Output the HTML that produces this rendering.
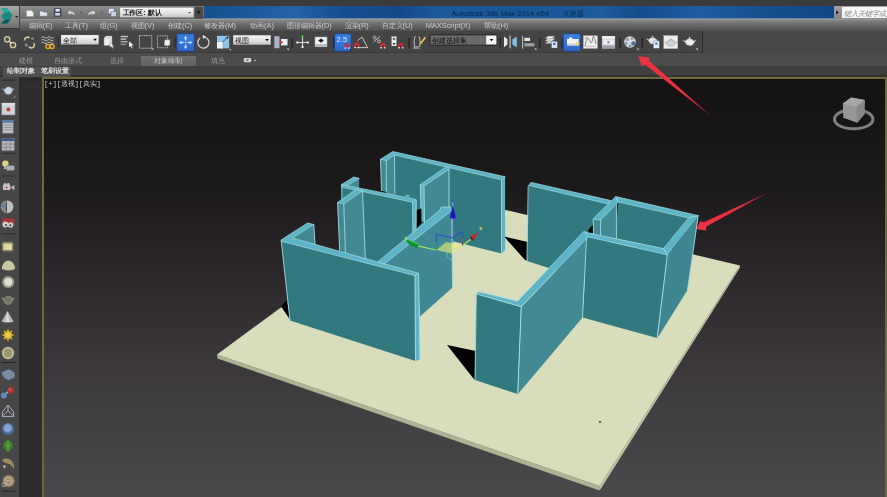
<!DOCTYPE html>
<html><head><meta charset="utf-8">
<style>
html,body{margin:0;padding:0;background:#454545;}
body{width:887px;height:497px;overflow:hidden;position:relative;font-family:"Liberation Sans",sans-serif;}
.abs{position:absolute;}
#topstrip{left:0;top:0;width:887px;height:6px;background:#3b3b3b;}
#qat{left:20px;top:6px;width:184px;height:13px;background:linear-gradient(#8e8e8e,#6a6a6a);}
#title{left:204px;top:6px;width:629.8px;height:13px;background:linear-gradient(90deg,#15508e 0%,#1b5899 6%,#2263a8 14%,#184f90 22%,#15498a 31%,#1d5a9c 37%,#1b5696 50%,#1e5c9e 63%,#164c8c 69%,#1f5ea2 79%,#17508f 88%,#124786 100%);border-bottom:1px solid #5c86b4;box-sizing:border-box;}
#titleR{left:833.8px;top:6px;width:53.2px;height:13px;background:linear-gradient(#a2a2a2,#858585);}
#search{left:841.8px;top:7px;width:45.2px;height:11px;background:#f6f6f6;}
#appbtn{left:0;top:6px;width:20px;height:23px;background:linear-gradient(#a9a9a9,#8a8a8a 55%,#6e6e6e);border-right:1px solid #444;border-bottom:1px solid #3a3a3a;box-sizing:border-box;}
#menubar{left:20px;top:19px;width:867px;height:12px;background:linear-gradient(#8a8a8a,#6c6c6c 45%,#4e4e4e);}
.menu{position:absolute;top:20.6px;font-size:7.4px;line-height:10px;color:#cacaca;white-space:nowrap;filter:blur(.45px);}
#toolbar{left:0;top:31px;width:703px;height:22px;background:#444445;border-right:1px solid #2e2e2e;border-bottom:1px solid #3a3a3a;box-sizing:border-box;}
#tbright{left:704px;top:31px;width:183px;height:22px;background:#484848;}
#ribtabs{left:0;top:53px;width:887px;height:13px;background:#4c4c4c;}
#ribsub{left:0;top:66px;width:887px;height:11px;background:#3f3f3f;}
.tab{position:absolute;top:55.6px;font-size:7px;line-height:10px;color:#9c9c9c;white-space:nowrap;filter:blur(.35px);}
#left1{left:0;top:77px;width:19px;height:420px;background:#474747;}
#left2{left:19px;top:77px;width:24px;height:420px;background:#2f2c2e;border-left:1px solid #2a2a2a;box-sizing:border-box;}
#vp{left:42.2px;top:76.8px;width:844.4px;height:430px;box-sizing:border-box;border:2px solid #70673a;background:linear-gradient(#131112 0%,#1c191b 25%,#2f2b2f 50%,#403d41 75%,#4b494c 100%);}
.dd{position:absolute;height:10px;box-sizing:border-box;}
</style></head><body>
<div id="topstrip" class="abs"></div>
<div id="qat" class="abs"></div>
<div id="title" class="abs"></div>
<div id="titleR" class="abs"></div>
<div id="search" class="abs"></div>
<div id="menubar" class="abs"></div>
<div class="abs" style="left:20px;top:19px;width:867px;height:1px;background:#9a9a9a;opacity:.8"></div>
<div id="appbtn" class="abs"></div>
<div id="toolbar" class="abs"></div>
<div id="tbright" class="abs"></div>
<div id="ribtabs" class="abs"></div>
<div id="ribsub" class="abs"></div>
<div class="abs" style="left:0;top:75px;width:887px;height:2px;background:#323232"></div>
<div id="left1" class="abs"></div>
<div id="left2" class="abs"></div>
<div id="vp" class="abs"></div>


<!-- CHROME DETAIL -->
<svg class="abs" style="left:0;top:0" width="887" height="80" viewBox="0 0 887 80" id="chrome">
<defs>
<filter id="b3" x="-10%" y="-10%" width="120%" height="120%"><feGaussianBlur stdDeviation="0.4"/></filter>
<linearGradient id="ddg" x1="0" y1="0" x2="0" y2="1"><stop offset="0" stop-color="#fafafa"/><stop offset=".5" stop-color="#e4e4e4"/><stop offset="1" stop-color="#c4c4c4"/></linearGradient>
<linearGradient id="blu" x1="0" y1="0" x2="0" y2="1"><stop offset="0" stop-color="#3a80e0"/><stop offset="1" stop-color="#2c68c8"/></linearGradient>
<g id="mag"><path d="M0,5 V2.6 A2.6,2.6 0 0 1 5.2,2.6 V5 H3.5 V2.8 A0.9,0.9 0 0 0 1.7,2.8 V5 Z" fill="#d82a2a"/><rect x="0" y="4.2" width="1.7" height="1.2" fill="#f4f4f4"/><rect x="3.5" y="4.2" width="1.7" height="1.2" fill="#f4f4f4"/></g>
</defs>
<g filter="url(#b3)">
<!-- app logo -->
<path d="M1,8.5 L7.5,8.5 L12.5,15.5 L7.5,23.5 L1,23.5 L4.5,20 L1,16 L4.5,12.5 Z" fill="#158a80"/>
<path d="M1,8.5 L7.5,8.5 L10,12 L4.5,12.5 Z" fill="#1fb0a0"/>
<path d="M1,23.5 L7.5,23.5 L10.5,19 L4.5,20 Z" fill="#0c5a58"/>
<path d="M15,16 h3.4 l-1.7,2 z" fill="#222"/>
<!-- QAT icons -->
<path d="M26.5,10.5 h5 l2,2 v4 h-7 z" fill="#f2f2f2" stroke="#9a9a9a" stroke-width=".5"/>
<path d="M39.5,11 h3 l1,1 h4 v4.3 h-8 z" fill="#dfe3ea" stroke="#5a6478" stroke-width=".6"/>
<rect x="53.8" y="8.3" width="7.6" height="8.4" rx="1" fill="#3c4658"/><rect x="55.5" y="9" width="4.2" height="2.6" fill="#e8ecf2"/><rect x="55.2" y="13" width="4.8" height="2.6" fill="#cfd6e0"/>
<path d="M67.5,12.5 l3,-2.6 v1.6 q4.5,0 4.5,4 q-1.2,-1.8 -4.5,-1.7 v1.5 z" fill="#d8dce2" stroke="#7a8290" stroke-width=".4"/>
<circle cx="81.3" cy="12.5" r=".8" fill="#444"/>
<path d="M95.5,12.5 l-3,-2.6 v1.6 q-4.5,0 -4.5,4 q1.2,-1.8 4.5,-1.7 v1.5 z" fill="#d8dce2" stroke="#7a8290" stroke-width=".4"/>
<circle cx="102" cy="12.5" r=".8" fill="#444"/>
<rect x="108.5" y="8.5" width="5.5" height="5" fill="#e6eaf0" stroke="#6a7486" stroke-width=".5"/><rect x="111" y="11.5" width="5.2" height="5" fill="#c8d4e6" stroke="#5a6a86" stroke-width=".5"/>
<!-- workspace dropdown -->
<rect x="119.6" y="7.2" width="74.4" height="10.6" rx="1" fill="url(#ddg)" stroke="#5a5a5a" stroke-width=".6"/>
<path d="M188.3,12 h2.6 l-1.3,1.6 z" fill="#333"/>
<rect x="194.6" y="6.6" width="8.6" height="12" fill="#4a4a4a"/><path d="M196.8,11.3 h4 l-2,2.6 z" fill="#0c0c0c"/>
<!-- title right -->
<path d="M836.2,10.4 v4 l2.6,-2 z" fill="#111"/>
</g>
<text x="122.5" y="15.4" font-size="7.4" font-family="Liberation Sans" fill="#151515" font-weight="bold" filter="url(#b3)" textLength="39" lengthAdjust="spacingAndGlyphs">工作区: 默认</text>
<text x="451.5" y="16" font-size="7.8" font-family="Liberation Sans" fill="#0a2548" filter="url(#b3)" opacity=".9" textLength="97.5" lengthAdjust="spacingAndGlyphs">Autodesk 3ds Max 2014 x64</text>
<text x="563" y="16" font-size="7.2" font-family="Liberation Sans" fill="#0a2548" filter="url(#b3)" opacity=".9">无标题</text>
<text x="843.8" y="15.6" font-size="7.2" font-style="italic" font-family="Liberation Sans" fill="#8c8c8c" filter="url(#b3)">键入关键字或短语</text>
</svg>


<!-- TOOLBAR ICONS -->
<svg class="abs" style="left:0;top:0" width="887" height="80" viewBox="0 0 887 80" id="tbicons">
<g filter="url(#b3)">
<!-- link -->
<circle cx="7.2" cy="39.3" r="2.6" fill="none" stroke="#cfc79e" stroke-width="1.5"/><circle cx="13" cy="45" r="2.6" fill="none" stroke="#cfc79e" stroke-width="1.5"/><line x1="9" y1="41" x2="11.2" y2="43.2" stroke="#e6e0bc" stroke-width="1.3"/>
<!-- unlink -->
<path d="M24.5,40.5 a3,3 0 0 1 5,-2.5" fill="none" stroke="#cfc79e" stroke-width="1.6"/><path d="M33.8,43 a3,3 0 0 1 -5,3.6" fill="none" stroke="#cfc79e" stroke-width="1.6"/><circle cx="26.3" cy="45" r="1.6" fill="#8a8a8a"/><circle cx="32.4" cy="38.6" r="1.4" fill="#8a8a8a"/>
<!-- bind warp -->
<path d="M41.5,37.5 q1.5,-1.6 3,0 t3,0 t3,0 t3,0" fill="none" stroke="#b9bcc0" stroke-width="1"/><path d="M41.5,40.2 q1.5,-1.6 3,0 t3,0 t3,0 t3,0" fill="none" stroke="#b9bcc0" stroke-width="1"/><path d="M41.5,42.9 q1.5,-1.6 3,0 t3,0 t3,0 t3,0" fill="none" stroke="#b9bcc0" stroke-width="1"/>
<circle cx="47.8" cy="46.5" r="2" fill="none" stroke="#e0a828" stroke-width="1.4"/><circle cx="52" cy="46.5" r="2" fill="none" stroke="#e0a828" stroke-width="1.4"/>
<rect x="57.6" y="37.5" width="1.3" height="10" fill="#2c2c2c"/>
<!-- dropdown all -->
<rect x="60.6" y="34.6" width="38.6" height="10.4" rx=".8" fill="url(#ddg)" stroke="#2a2a2a" stroke-width=".8"/><path d="M93.2,38.8 h3.6 l-1.8,2.2 z" fill="#111"/>
<!-- select object -->
<path d="M104,38 l2,-2 h6 v7.5 l-2,2 h-6 z" fill="#eceef0" stroke="#8a8e94" stroke-width=".5"/><path d="M104,38 h6 v7.5" fill="none" stroke="#a8acb2" stroke-width=".5"/><path d="M110.2,42.5 v5.3 l1.3,-1.2 l1,2 l.9,-.5 l-1,-1.9 h1.7 z" fill="#fff" stroke="#555" stroke-width=".35"/>
<!-- select by name -->
<rect x="120.6" y="35.8" width="7.5" height="1.4" fill="#c9c9c9"/><rect x="120.6" y="38.4" width="5.6" height="1.4" fill="#c9c9c9"/><rect x="120.6" y="41" width="7" height="1.4" fill="#b0b0b0"/><rect x="120.6" y="43.6" width="5.6" height="1.4" fill="#999"/>
<path d="M129,41 v6.6 l1.6,-1.5 l1.2,2.3 l1,-.5 l-1.2,-2.3 h2.2 z" fill="#fff" stroke="#555" stroke-width=".35"/>
<!-- rect region -->
<rect x="139.4" y="35.6" width="12.4" height="12.6" fill="none" stroke="#c4c4c4" stroke-width=".9" stroke-dasharray="1.6,.7"/><path d="M151,48.3 l2.4,0 l0,2 z" fill="#ddd"/>
<!-- window crossing -->
<rect x="157.4" y="35.8" width="10" height="12" fill="none" stroke="#bdbdbd" stroke-width=".9" stroke-dasharray="1.6,.7"/><path d="M164.5,41 l1.2,-1.2 h4.2 v4.5 l-1.2,1.2 h-4.2 z" fill="#eef0f2" stroke="#999" stroke-width=".4"/>
<rect x="174.6" y="38" width="1.2" height="10" fill="#2c2c2c"/>
<!-- move -->
<rect x="176.9" y="33.8" width="17.5" height="17.5" rx="1.2" fill="url(#blu)" stroke="#1c3c7a" stroke-width=".7"/>
<path d="M185.6,36 l1.8,2.2 h-1.1 v2.4 h-1.4 v-2.4 h-1.1 z M185.6,49 l1.8,-2.2 h-1.1 v-2.4 h-1.4 v2.4 h-1.1 z M179,42.5 l2.2,-1.8 v1.1 h2.4 v1.4 h-2.4 v1.1 z M192.2,42.5 l-2.2,-1.8 v1.1 h-2.4 v1.4 h2.4 v1.1 z" fill="#bfe4ff"/><circle cx="185.6" cy="42.5" r=".8" fill="#e8f6ff"/>
<!-- rotate -->
<path d="M205.2,37.2 A5.6,5.6 0 1 1 200.2,37.9" fill="none" stroke="#d6d6d6" stroke-width="1.2"/><path d="M202.5,35 l3.4,1.4 l-2.6,2.6 z" fill="#f2f2f2"/>
<!-- scale -->
<rect x="217" y="35.8" width="12.2" height="12.6" fill="#8fc4ec"/><rect x="217" y="41.5" width="6" height="6.9" fill="#eef2f6"/><path d="M217,41.5 h6 v6.9" fill="none" stroke="#6a8eb0" stroke-width=".5"/><path d="M223,41.5 l4.4,-4" stroke="#1c2c50" stroke-width=".8"/><circle cx="227.5" cy="37.5" r="1" fill="#101c40"/><path d="M229,49 l2,0 l0,1.8 z" fill="#ddd"/>
<!-- dropdown view -->
<rect x="232.8" y="34.8" width="38.4" height="10.4" rx=".8" fill="url(#ddg)" stroke="#2a2a2a" stroke-width=".8"/><path d="M265.2,39 h3.6 l-1.8,2.2 z" fill="#111"/>
<!-- pivot -->
<rect x="274.3" y="36.2" width="5.2" height="12" fill="#aab4c8"/><rect x="281" y="39" width="6.5" height="6.4" fill="#f0f0f0"/><circle cx="281.2" cy="42.3" r="1.4" fill="#e03030"/><path d="M286.6,48.6 l2.2,0 l0,2 z" fill="#ddd"/>
<rect x="291.6" y="38" width="1.2" height="10" fill="#222"/>
<!-- manipulate -->
<path d="M302.5,37 v10 M297,42.5 h11" stroke="#d8d8d8" stroke-width="1.1"/><circle cx="302.5" cy="36.6" r="1.3" fill="#40c040"/><rect x="301.5" y="46" width="2" height="2" fill="#eee"/><rect x="296.3" y="41.5" width="2" height="2" fill="#eee"/><rect x="306.8" y="41.5" width="2" height="2" fill="#eee"/>
<!-- kbd override -->
<rect x="315" y="37" width="12" height="9.8" fill="#f0f0f0" stroke="#9aa" stroke-width=".5"/><rect x="315" y="44" width="12" height="2.8" fill="#b8bcc4"/><path d="M321,38.4 l2.8,2.2 l-2.8,2.2 l-2.8,-2.2 z" fill="#1a1a1a"/>
<!-- snap 2.5 -->
<rect x="333" y="36" width="1.4" height="12" fill="#1c2a4a"/>
<rect x="334.6" y="33.8" width="16.6" height="17.4" rx="1" fill="url(#blu)" stroke="#1c3c7a" stroke-width=".7"/>
<use href="#mag" x="344.6" y="43.2"/><path d="M349.6,49.6 l1.6,0 l0,1.6 z" fill="#0a0a0a"/>
<!-- angle snap -->
<path d="M357,47.6 h10.6 l-5.6,-10.6" fill="none" stroke="#d2d2d2" stroke-width=".9"/><path d="M357.6,40.6 l4.4,-3.6" stroke="#d2d2d2" stroke-width=".9"/><use href="#mag" x="354.3" y="42.8"/>
<!-- percent snap -->
<path d="M373.5,42 l6.5,-5.5" stroke="#c8c8c8" stroke-width="1"/><circle cx="374.6" cy="37.6" r="1.4" fill="none" stroke="#c8c8c8" stroke-width=".9"/><circle cx="379" cy="41.4" r="1.4" fill="none" stroke="#c8c8c8" stroke-width=".9"/><use href="#mag" x="380.3" y="43"/>
<!-- spinner snap -->
<rect x="391.5" y="36.4" width="5" height="9.6" fill="#ececec" stroke="#888" stroke-width=".4"/><path d="M394,37.4 l1.6,2 h-3.2 z M394,45 l1.6,-2 h-3.2 z" fill="#222"/><use href="#mag" x="398.3" y="43"/>
<rect x="408.4" y="38" width="1.4" height="10" fill="#3a1c1c"/>
<!-- named sel edit -->
<path d="M415.8,36.6 q-1.4,0 -1.4,1.6 v2 q0,1.4 -1,1.6 q1,.2 1,1.6 v2 q0,1.6 1.4,1.6 M418.4,36.6 q1.4,0 1.4,1.6 v2 q0,1.4 1,1.6 q-1,.2 -1,1.6 v2 q0,1.6 -1.4,1.6" fill="none" stroke="#cfcfcf" stroke-width=".9"/><path d="M419.5,43.6 l5.2,-6.8 l1.4,1 l-5.2,6.8 z" fill="#e8c840"/><text x="413.3" y="48.8" font-size="3.6" fill="#ccc" font-family="Liberation Sans">ABC</text>
<!-- named sel dropdown -->
<rect x="430" y="34.8" width="67" height="10.4" rx=".8" fill="#6b6b6b" stroke="#1e1e1e" stroke-width="1"/><rect x="486.2" y="35.6" width="10.2" height="8.8" fill="#f6f6f6"/><path d="M489.6,39 h3.8 l-1.9,2.3 z" fill="#111"/>
<rect x="499.6" y="38" width="1.3" height="10" fill="#252525"/>
<!-- mirror -->
<path d="M504,36.6 v10.6 l3.4,-2.6 v-5.4 z" fill="#e9e9e9"/><path d="M516.8,36.6 v10.6 l-4.4,-2.6 v-5.4 z" fill="#7cc0ec"/><rect x="509.4" y="35.6" width="1.4" height="12.8" fill="#a9b0b8"/>
<!-- align -->
<rect x="522" y="36" width="1.2" height="12.6" fill="#b8b8b8"/><rect x="524.4" y="37.8" width="5.6" height="3.2" fill="#e6e6e6"/><rect x="524.4" y="43.2" width="10" height="3.2" fill="#9aa2ac"/><path d="M534.2,48.6 l2.2,0 l0,2 z" fill="#ddd"/>
<rect x="539.2" y="38" width="1.3" height="10" fill="#1e1e1e"/>
<!-- layers -->
<path d="M545,38.6 l3,-2.4 h7 l-3,2.4 z" fill="#f2f2f2" stroke="#888" stroke-width=".3"/><path d="M545,41 l3,-2.4 h7 l-3,2.4 z" fill="#e2e2e2" stroke="#888" stroke-width=".3"/><path d="M545,43.4 l3,-2.4 h7 l-3,2.4 z" fill="#d0d0d0" stroke="#888" stroke-width=".3"/><rect x="551.6" y="41.6" width="5.6" height="6.4" fill="#dfe8f4" stroke="#6a7a94" stroke-width=".4"/><circle cx="554.3" cy="44" r="1.3" fill="#3a66b0"/>
<!-- ribbon toggle -->
<rect x="561.4" y="38" width="1.3" height="10" fill="#1c2a4a"/>
<rect x="563.2" y="33.8" width="17.4" height="17.4" rx="1" fill="url(#blu)" stroke="#1c3c7a" stroke-width=".7"/>
<path d="M567,39 h2 v-1.6 h3.4 v1.6 h6.2 v6.4 h-11.6 z" fill="#f1f3f6"/><rect x="567" y="43.6" width="11.6" height="1.8" fill="#c8d0dc"/><path d="M577.6,41.4 l2.4,2.2 l-2.4,2.2 l-2.4,-2.2 z" fill="#ecd860"/>
<!-- curve editor -->
<rect x="583.4" y="35.8" width="14" height="12.6" fill="#eeeeee" stroke="#b8b8b8" stroke-width=".5"/><path d="M585,46 q2,-12 4.4,-6 t3.2,-1 t3.4,5" fill="none" stroke="#6a7078" stroke-width=".8"/><path d="M585,46.6 h11" stroke="#999" stroke-width=".5"/><rect x="585" y="37" width="2.4" height="2.4" fill="#bbb"/>
<!-- schematic -->
<rect x="602" y="36.2" width="13" height="12.2" fill="#d9dce2" stroke="#8a8e96" stroke-width=".4"/><rect x="602" y="36.2" width="13" height="2" fill="#f6f6f6"/><rect x="603.4" y="40.4" width="4" height="3.6" fill="#f4f4f4"/><rect x="609.6" y="40.4" width="4" height="3.6" fill="#f4f4f4"/><path d="M607.4,42.2 h2.2" stroke="#333" stroke-width=".8"/><rect x="602" y="45.4" width="13" height="3" fill="#98a0b0"/>
<rect x="619.6" y="38" width="1.3" height="10" fill="#1e1e1e"/>
<!-- material editor -->
<circle cx="630" cy="42" r="5.8" fill="#d9dde2"/><circle cx="627.4" cy="39.4" r="1.5" fill="#8e949c"/><circle cx="632" cy="38.6" r="1.5" fill="#9aa0a8"/><circle cx="626" cy="43.4" r="1.5" fill="#8e949c"/><circle cx="630" cy="46" r="1.5" fill="#8e949c"/><circle cx="633.4" cy="43.4" r="2.2" fill="#4a6aa8"/><path d="M636.4,48.6 l2.2,0 l0,2 z" fill="#ddd"/>
<rect x="641.6" y="38" width="1.3" height="10" fill="#1e1e1e"/>
<!-- render setup -->
<path d="M646,38.6 l3,1 q.6,-2 3.6,-2 t3.6,2 q1.2,-.6 1.2,1 q0,1.2 -1.2,1 q-.6,2.4 -3.6,2.4 t-3.8,-3 z" fill="#e6e6e6" stroke="#999" stroke-width=".3"/><circle cx="652.6" cy="36.6" r=".8" fill="#ddd"/><rect x="653.4" y="41" width="5.8" height="7.2" fill="#e4ebf4" stroke="#6c7c96" stroke-width=".4"/><circle cx="656.3" cy="43.6" r="1.2" fill="#3a66b0"/>
<!-- rendered frame window -->
<rect x="663.8" y="35.6" width="14" height="13" fill="#ececec" stroke="#bbb" stroke-width=".4"/><ellipse cx="670.8" cy="43" rx="4.2" ry="3" fill="#cfd2d6" stroke="#8a8e94" stroke-width=".5"/><path d="M666,42 q-1.6,0 -1,1.6 M675.6,42 q1.6,-.4 1,1.4" fill="none" stroke="#8a8e94" stroke-width=".6"/><circle cx="670.8" cy="39.4" r=".8" fill="#9a9ea4"/>
<!-- render -->
<path d="M682.6,40 l3.2,1 q.6,-2.2 3.8,-2.2 t3.8,2.2 q1.4,-.8 2.4,-.6 l-2,2.6 q-.6,2.6 -4.2,2.6 t-4.2,-3 z" fill="#ebebeb" stroke="#a0a0a0" stroke-width=".3"/><circle cx="689.6" cy="38" r=".9" fill="#ddd"/><path d="M695.6,48.6 l2.2,0 l0,2 z" fill="#ddd"/>
</g>
<text x="62.6" y="42.7" font-size="7" font-family="Liberation Sans" fill="#111" filter="url(#b3)">全部</text>
<text x="234.8" y="42.9" font-size="7" font-family="Liberation Sans" fill="#111" filter="url(#b3)">视图</text>
<text x="432.4" y="43" font-size="7.4" font-family="Liberation Sans" fill="#0c0c0c" filter="url(#b3)">创建选择集</text>
<text x="336.6" y="42.2" font-size="7.6" font-family="Liberation Sans" fill="#d8ecff" filter="url(#b3)">2.5</text>
</svg>


<!-- RIBBON + LEFT ICONS -->
<div class="abs" style="left:140.5px;top:55.5px;width:55px;height:10.5px;background:linear-gradient(#6e6e6e,#636363);"></div>
<div class="abs" style="left:2.5px;top:66.5px;width:68.5px;height:10px;background:#4f4f4f;"></div>
<div class="tab" style="left:18.6px">建模</div>
<div class="tab" style="left:54px">自由形式</div>
<div class="tab" style="left:110px">选择</div>
<div class="tab" style="left:154px;color:#c6c6c6">对象绘制</div>
<div class="tab" style="left:211px">填充</div>
<div class="tab" style="left:6.8px;top:66.4px;color:#dcdcdc;font-weight:bold">绘制对象</div>
<div class="tab" style="left:40.6px;top:66.4px;color:#dcdcdc;font-weight:bold">笔刷设置</div>
<div class="abs" style="left:44px;top:80.2px;font-family:'Liberation Mono',monospace;font-size:7.4px;line-height:9px;color:#c9c9c9;white-space:nowrap;filter:blur(.35px);letter-spacing:-.2px">[+][透视][真实]</div>
<svg class="abs" style="left:0;top:0" width="887" height="497" viewBox="0 0 887 497" id="lefticons">
<g filter="url(#b3)" opacity=".88">
<rect x="243.8" y="58" width="7.4" height="4.2" rx="1.2" fill="#e9e9e9"/><path d="M246,59.4 h3 l-1.5,1.8 z" fill="#444"/><rect x="254" y="60" width="2.2" height="1" fill="#ccc"/>
<rect x="2" y="79.6" width="15" height="1" fill="#2a2a2a"/><rect x="21.5" y="79" width="19" height="1.6" fill="#262626"/>
<!-- 1 teapot -->
<path d="M2.4,88.4 l2.6,1 q.6,-2.6 3.6,-2.6 t3.4,2.2 q1.4,-.8 2,-.2 l-1.8,2.4 q-.4,3.2 -3.8,3.2 t-4,-3.2 z" fill="#dfeaf6" stroke="#7a98c0" stroke-width=".5"/><path d="M13.6,98 l2.4,-2.4" stroke="#bbb" stroke-width=".8"/>
<!-- 2 frame -->
<rect x="1.8" y="103" width="13.2" height="12" fill="#e4e6ea" stroke="#8a94a8" stroke-width=".6"/><rect x="1.8" y="103" width="13.2" height="2.2" fill="#f6f6f8"/><circle cx="8.4" cy="109.6" r="2" fill="#d03838"/>
<!-- 3 list -->
<rect x="2.6" y="120.4" width="10.6" height="12.8" fill="#cfd2d6" stroke="#70809a" stroke-width=".5"/><rect x="2.6" y="120.4" width="10.6" height="2.4" fill="#5a82c0"/><path d="M4,125 h8 M4,127.4 h8 M4,129.8 h8" stroke="#8a8e94" stroke-width=".8"/>
<!-- 4 table -->
<rect x="1.8" y="138.4" width="12.6" height="12.4" fill="#c6c9ce" stroke="#6a7688" stroke-width=".5"/><rect x="1.8" y="138.4" width="12.6" height="2.6" fill="#3c5c98"/><path d="M1.8,144 h12.6 M1.8,147.4 h12.6 M6,141 v9.8 M10.2,141 v9.8" stroke="#7c8088" stroke-width=".6"/>
<rect x="1.6" y="152.8" width="15" height="1" fill="#2c2c2c"/>
<!-- 6 bulb -->
<circle cx="5.4" cy="163.6" r="3.2" fill="#f4ec90"/><rect x="4" y="166" width="2.8" height="3" fill="#c8c8b0"/><rect x="6.4" y="165.4" width="8" height="5" rx=".8" fill="#b8c0cc" stroke="#68707c" stroke-width=".4"/>
<rect x="1.6" y="175.4" width="15" height="1" fill="#2c2c2c"/>
<!-- 8 camera -->
<rect x="3" y="185" width="7.4" height="5" rx="1" fill="#d8d8dc"/><path d="M10.4,187.5 l4,-2.6 v5.4 z" fill="#c4c4c8"/><circle cx="5" cy="184.4" r="1.5" fill="#dcdce0"/><circle cx="8.2" cy="184.2" r="1.3" fill="#dcdce0"/><circle cx="6.6" cy="187.4" r="1" fill="#c03030"/>
<!-- 9 half disc -->
<path d="M7,200.4 a6.4,6.4 0 0 1 0,12.8 z" fill="#cfd2d4"/><path d="M7,200.4 a6.4,6.4 0 0 0 0,12.8 q-3,-6.4 0,-12.8" fill="#8e9296"/><path d="M1.6,206 h5 l-1.6,-1.6 M6.6,206 l-1.6,1.6" stroke="#4a78c0" stroke-width="1" fill="none"/>
<!-- 10 eyes -->
<circle cx="5.4" cy="221.6" r="3.6" fill="#b83038"/><circle cx="11" cy="221.6" r="3.6" fill="#b83038"/><circle cx="5.4" cy="224.6" r="3" fill="#e4e4e6"/><circle cx="10.6" cy="225" r="2.8" fill="#e4e4e6"/><circle cx="6" cy="225" r="1" fill="#303848"/><circle cx="10.4" cy="225.2" r="1" fill="#303848"/>
<rect x="1.6" y="233.4" width="15" height="1" fill="#2c2c2c"/>
<!-- 12 yellow rect -->
<rect x="2" y="241.8" width="11.4" height="9.8" rx="2" fill="#8e8c68"/><rect x="3.4" y="243.4" width="8.6" height="6.6" rx="1" fill="#f2eea8"/>
<!-- 13 dome -->
<path d="M1.8,269 a6.6,8.6 0 0 1 13.2,0 q-6.6,2.6 -13.2,0" fill="#d9dcae"/><path d="M1.8,269 q6.6,2.6 13.2,0 q-6.6,3.4 -13.2,0" fill="#9c9e78"/>
<!-- 14 white glow -->
<circle cx="8.2" cy="282" r="6" fill="#a9a99a"/><circle cx="8.2" cy="282" r="4" fill="#f6f6e2"/>
<!-- 15 teapot gray -->
<path d="M1.8,298 l2.8,.8 q.6,-2.6 3.6,-2.6 t3.6,2.4 q1.6,-.8 2.4,-.2 l-2,2.6 q-.4,3.4 -4,3.4 t-4.2,-3.4 z" fill="#7c8068" stroke="#a8ac94" stroke-width=".7"/>
<!-- 16 cone -->
<path d="M7.6,311 l6,10.4 q-6,2.4 -12,0 z" fill="#c8c8c8"/><path d="M7.6,311 l2,10.8 q-2,.4 -4,0 z" fill="#f0f0f0"/>
<!-- 17 sun -->
<path d="M8,328.6 l1.4,3 l3.2,-1.2 l-1.2,3.2 l3,1.4 l-3,1.4 l1.2,3.2 l-3.2,-1.2 l-1.4,3 l-1.4,-3 l-3.2,1.2 l1.2,-3.2 l-3,-1.4 l3,-1.4 l-1.2,-3.2 l3.2,1.2 z" fill="#e8b820"/><circle cx="8" cy="335" r="3" fill="#fbe048"/>
<!-- 18 beige circle -->
<circle cx="8" cy="353" r="6.2" fill="#cfca9e"/><circle cx="8" cy="353" r="4.2" fill="#a8a274"/>
<rect x="1.6" y="362" width="15" height="1" fill="#222"/>
<!-- 20 cloth -->
<path d="M1.6,373 l8,-3.4 M2.6,375.6 l10,-4.4 M4.6,377.8 l10,-4.4 M7.6,379.6 l7,-3" stroke="#7aa2dc" stroke-width="1.3"/><path d="M2,374.4 l9,-3.8 M3.6,376.8 l10,-4.4 M6,378.8 l8.6,-3.8" stroke="#e8ecf4" stroke-width=".7"/>
<!-- 21 spheres -->
<path d="M4,395 l6.4,-5" stroke="#c8c8c8" stroke-width="1.4"/><circle cx="3.8" cy="395.4" r="3" fill="#6a94d0"/><circle cx="10.8" cy="390.4" r="3.2" fill="#c83030"/><circle cx="9.8" cy="389.4" r="1" fill="#f08080"/>
<!-- 22 frame -->
<path d="M8,405 l-5.6,7 v4.4 h11.2 v-4.4 z M8,405 v6 l-5.6,5 M8,411 l5.6,5" fill="none" stroke="#c4ccd6" stroke-width=".9"/>
<!-- 23 blue sphere -->
<circle cx="8" cy="428.8" r="5.8" fill="#4a7ac4"/><path d="M4,426 l3,-2 l3.6,1 l1.6,3 l-2,3.4 l-4,.6 l-2.6,-2.6 z" fill="#9cc0ec" opacity=".8"/>
<!-- 24 leaf -->
<path d="M8,439.6 l4,3 l.8,5 l-4.8,4.6 l-4.8,-4.6 l.8,-5 z" fill="#3c8c28"/><path d="M8,441 v10 M5,444 l3,3 l3,-3" stroke="#7cc850" stroke-width=".8" fill="none"/>
<!-- 25 claw -->
<path d="M2,460 q6,-3.6 10.6,2 q2,3.6 1.4,7.6 q-2.4,-5.6 -7,-6 q-3,-.4 -5,-3.6" fill="#b09468"/><path d="M3,466.4 h3 M4.4,465 v3.4" stroke="#ddd" stroke-width=".9"/>
<!-- 26 shell -->
<circle cx="8.6" cy="481" r="6" fill="#a89070"/><path d="M8.6,481 m-3.6,0 a3.6,3.6 0 1 1 3.6,3.6 a2.2,2.2 0 1 1 2,-3" fill="none" stroke="#e0d0b0" stroke-width="1"/><circle cx="4" cy="484.6" r="2" fill="none" stroke="#d8d0c0" stroke-width=".8"/>
<rect x="1.6" y="490.6" width="15" height="1" fill="#222"/>
</g>
<!-- viewcube -->
<g filter="url(#b3)">
<ellipse cx="853.7" cy="119.2" rx="19.2" ry="9.6" fill="none" stroke="#8c8c8e" stroke-width="3" opacity=".9"/>
<path d="M842.9,103.6 L851.2,97.6 L864.8,100.1 L864.3,114.2 L857.2,122.7 L843.3,117.7 Z" fill="#959597"/>
<path d="M842.9,103.6 L851.2,97.6 L864.8,100.1 L856.4,106.8 Z" fill="#a6a6a8"/>
<path d="M856.4,106.8 L864.8,100.1 L864.3,114.2 L857.2,122.7 Z" fill="#88888a"/>
</g>
</svg>

<!-- TEXT -->

<div class="menu" style="left:28.7px">编辑(E)</div>
<div class="menu" style="left:64.5px">工具(T)</div>
<div class="menu" style="left:100px">组(G)</div>
<div class="menu" style="left:130.5px">视图(V)</div>
<div class="menu" style="left:168px">创建(C)</div>
<div class="menu" style="left:204px">修改器(M)</div>
<div class="menu" style="left:250px">动画(A)</div>
<div class="menu" style="left:286.5px">图形编辑器(D)</div>
<div class="menu" style="left:344.5px">渲染(R)</div>
<div class="menu" style="left:381.5px">自定义(U)</div>
<div class="menu" style="left:425.7px">MAXScript(X)</div>
<div class="menu" style="left:484px">帮助(H)</div>
<!-- SCENE -->
<svg class="abs" style="left:0;top:0" width="887" height="497" viewBox="0 0 887 497" id="scene">
<defs><filter id="soft" x="-5%" y="-5%" width="110%" height="110%"><feGaussianBlur stdDeviation="0.55"/></filter><filter id="soft2" x="-5%" y="-5%" width="110%" height="110%"><feGaussianBlur stdDeviation="0.6"/></filter><linearGradient id="ag1" gradientUnits="userSpaceOnUse" x1="640" y1="57" x2="712" y2="117"><stop offset="0" stop-color="#ee3440"/><stop offset=".6" stop-color="#e0303c"/><stop offset="1" stop-color="#8a2434"/></linearGradient><linearGradient id="ag2" gradientUnits="userSpaceOnUse" x1="697" y1="229" x2="770" y2="191.5"><stop offset="0" stop-color="#ee3440"/><stop offset=".6" stop-color="#e0303c"/><stop offset="1" stop-color="#8a2434"/></linearGradient></defs>
<g filter="url(#soft)">
<polygon points="217.0,354.5 599.7,486.0 599.7,490.5 217.5,358.5" fill="#aeb394" />
<polygon points="599.7,486.0 740.0,265.5 740.0,267.5 599.7,490.5" fill="#bfc4a2" />
<polygon points="217.0,354.5 436.0,193.5 740.0,265.5 599.7,486.0" fill="#d8ddbb" />
<polygon points="281.0,306.5 287.0,300.0 291.0,321.0" fill="#020202" />
<polygon points="447.0,345.0 476.0,351.0 475.0,380.5" fill="#020202" />
<polygon points="504.0,236.5 528.0,242.0 528.0,261.0 525.0,260.0" fill="#020202" />
<polygon points="394.5,155.0 501.5,179.8 501.5,253.4 462.5,243.8 448.0,240.0 394.8,226.0" fill="#33787f" />
<polygon points="501.5,179.8 505.1,176.2 505.1,250.5 501.5,253.4" fill="#5bb4c6" />
<polygon points="380.5,159.3 386.3,160.6 386.4,192.0 381.5,190.7" fill="#428994" />
<polygon points="386.3,160.6 394.5,155.0 394.8,230.0 386.4,230.0" fill="#428994" />
<polygon points="380.5,159.3 392.8,151.5 505.2,176.8 501.5,179.8 394.5,155.0 386.3,160.6" fill="#5bb4c6" stroke="#a2dde6" stroke-width="0.7" stroke-linejoin="round" />
<polyline points="386.3,160.8 386.4,192.0" fill="none" stroke="#a2dde6" stroke-width="0.9" stroke-linecap="round" stroke-linejoin="round" />
<polyline points="394.5,155.2 394.8,194.0" fill="none" stroke="#a2dde6" stroke-width="0.9" stroke-linecap="round" stroke-linejoin="round" />
<polyline points="380.5,159.5 381.5,190.5" fill="none" stroke="#a2dde6" stroke-width="0.9" stroke-linecap="round" stroke-linejoin="round" />
<polyline points="501.5,180.0 501.5,253.0" fill="none" stroke="#a2dde6" stroke-width="0.9" stroke-linecap="round" stroke-linejoin="round" />
<polygon points="424.0,186.0 449.0,169.5 449.0,240.0 424.5,222.0" fill="#428994" />
<polygon points="420.2,184.7 424.0,186.0 424.5,222.0 421.4,221.0" fill="#5bb4c6" />
<polygon points="446.7,166.5 449.5,169.0 424.0,186.0 420.2,184.7" fill="#5bb4c6" stroke="#a2dde6" stroke-width="0.7" stroke-linejoin="round" />
<polyline points="424.0,186.0 424.5,222.0" fill="none" stroke="#a2dde6" stroke-width="0.9" stroke-linecap="round" stroke-linejoin="round" />
<polyline points="449.0,169.5 449.0,210.0" fill="none" stroke="#a2dde6" stroke-width="0.9" stroke-linecap="round" stroke-linejoin="round" />
<polyline points="420.3,185.0 421.3,221.0" fill="none" stroke="#a2dde6" stroke-width="0.9" stroke-linecap="round" stroke-linejoin="round" />
<polygon points="416.5,210.0 421.4,208.5 421.6,223.0 416.5,228.5" fill="#020202" />
<polygon points="528.7,186.0 611.0,204.0 611.0,288.0 527.0,261.0" fill="#33787f" />
<polyline points="528.2,186.0 527.0,261.0" fill="none" stroke="#a2dde6" stroke-width="0.9" stroke-linecap="round" stroke-linejoin="round" />
<polygon points="593.0,224.6 588.0,230.2 589.0,232.6 593.3,233.0" fill="#020202" />
<polygon points="618.3,202.0 688.5,218.0 663.4,248.6 615.0,238.5" fill="#33787f" />
<polygon points="600.6,220.2 616.4,204.0 616.4,238.8 600.6,235.5" fill="#428994" />
<polygon points="593.0,218.9 600.6,220.2 600.6,235.5 593.5,233.8" fill="#428994" />
<polyline points="616.4,204.5 616.4,238.8" fill="none" stroke="#a2dde6" stroke-width="0.9" stroke-linecap="round" stroke-linejoin="round" />
<polyline points="600.6,220.4 600.6,235.3" fill="none" stroke="#a2dde6" stroke-width="0.9" stroke-linecap="round" stroke-linejoin="round" />
<polyline points="593.2,219.2 593.5,233.6" fill="none" stroke="#a2dde6" stroke-width="0.9" stroke-linecap="round" stroke-linejoin="round" />
<polygon points="528.7,185.5 531.0,182.4 611.0,200.6 608.2,203.9" fill="#5bb4c6" stroke="#a2dde6" stroke-width="0.7" stroke-linejoin="round" />
<polygon points="615.8,196.6 618.3,202.0 600.6,220.2 593.0,218.9" fill="#5bb4c6" stroke="#a2dde6" stroke-width="0.7" stroke-linejoin="round" />
<polygon points="615.8,196.6 698.5,215.7 688.5,218.0 618.3,202.0" fill="#5bb4c6" stroke="#a2dde6" stroke-width="0.7" stroke-linejoin="round" />
<polygon points="698.5,215.7 667.1,254.8 663.4,248.6 688.5,218.0" fill="#5bb4c6" stroke="#a2dde6" stroke-width="0.7" stroke-linejoin="round" />
<polygon points="587.5,237.0 667.5,254.5 657.0,338.0 582.5,317.5" fill="#33787f" />
<polygon points="667.5,254.5 698.3,216.3 687.5,290.0 657.5,338.0" fill="#408691" />
<polyline points="667.3,255.0 657.2,338.0" fill="none" stroke="#a2dde6" stroke-width="0.9" stroke-linecap="round" stroke-linejoin="round" />
<polyline points="698.0,217.0 687.5,290.0" fill="none" stroke="#a2dde6" stroke-width="0.9" stroke-linecap="round" stroke-linejoin="round" />
<polygon points="341.7,186.5 357.0,190.0 341.9,201.0" fill="#33787f" />
<polyline points="341.7,185.0 341.9,200.5" fill="none" stroke="#a2dde6" stroke-width="0.9" stroke-linecap="round" stroke-linejoin="round" />
<polygon points="362.5,191.0 412.5,202.0 412.9,262.0 365.0,262.0" fill="#33787f" />
<polygon points="412.5,202.0 416.3,199.8 416.0,232.0 413.0,234.0" fill="#5bb4c6" />
<polygon points="343.8,204.0 362.5,191.0 365.5,262.0 345.5,254.0" fill="#428994" />
<polygon points="337.5,202.5 343.8,204.0 345.5,254.0 339.7,250.5" fill="#428994" />
<polygon points="359.2,178.3 359.2,188.5 347.2,185.7" fill="#428994" />
<polygon points="341.6,184.4 347.2,185.7 415.9,199.4 412.3,202.2 341.6,187.0" fill="#5bb4c6" stroke="#a2dde6" stroke-width="0.7" stroke-linejoin="round" />
<polygon points="341.6,184.4 353.7,177.0 359.2,178.3 347.2,185.7" fill="#5bb4c6" stroke="#a2dde6" stroke-width="0.7" stroke-linejoin="round" />
<polygon points="356.3,189.2 362.5,191.0 343.8,204.0 337.5,202.5" fill="#5bb4c6" stroke="#a2dde6" stroke-width="0.7" stroke-linejoin="round" />
<polygon points="405.5,194.5 409.5,195.3 409.5,198.5 405.5,197.5" fill="#5bb4c6" />
<polyline points="362.5,191.0 365.5,262.0" fill="none" stroke="#a2dde6" stroke-width="0.9" stroke-linecap="round" stroke-linejoin="round" />
<polyline points="343.8,204.0 345.5,254.0" fill="none" stroke="#a2dde6" stroke-width="0.9" stroke-linecap="round" stroke-linejoin="round" />
<polyline points="337.6,202.8 339.7,250.5" fill="none" stroke="#a2dde6" stroke-width="0.9" stroke-linecap="round" stroke-linejoin="round" />
<polyline points="412.6,202.2 413.0,234.0" fill="none" stroke="#a2dde6" stroke-width="0.9" stroke-linecap="round" stroke-linejoin="round" />
<polyline points="416.2,200.0 416.0,232.0" fill="none" stroke="#a2dde6" stroke-width="0.9" stroke-linecap="round" stroke-linejoin="round" />
<polygon points="451.5,210.5 384.0,264.0 417.5,273.8 420.0,316.5 452.5,287.5" fill="#418893" />
<polygon points="440.0,210.0 441.0,207.2 450.3,206.8 451.4,210.8 386.9,261.8 383.9,264.0 377.6,262.0" fill="#5bb4c6" stroke="#a2dde6" stroke-width="0.7" stroke-linejoin="round" />
<polyline points="451.8,209.5 452.5,287.5" fill="none" stroke="#a2dde6" stroke-width="0.9" stroke-linecap="round" stroke-linejoin="round" />
<polygon points="292.5,238.0 313.8,224.5 315.0,244.5" fill="#428994" />
<polygon points="281.2,241.0 415.0,275.3 415.5,361.0 290.0,320.5" fill="#33787f" />
<polygon points="415.0,275.5 418.5,273.2 420.0,359.5 415.5,361.0" fill="#5bb4c6" />
<polygon points="281.0,240.0 307.5,223.0 313.8,224.5 292.5,238.0 384.0,263.8 418.5,273.2 415.0,275.6 281.2,241.3" fill="#5bb4c6" stroke="#a2dde6" stroke-width="0.7" stroke-linejoin="round" />
<polyline points="313.8,224.5 315.0,244.5" fill="none" stroke="#a2dde6" stroke-width="0.9" stroke-linecap="round" stroke-linejoin="round" />
<polyline points="281.3,241.3 290.0,320.5" fill="none" stroke="#a2dde6" stroke-width="0.9" stroke-linecap="round" stroke-linejoin="round" />
<polyline points="415.0,275.6 415.5,361.0" fill="none" stroke="#a2dde6" stroke-width="0.9" stroke-linecap="round" stroke-linejoin="round" />
<polyline points="418.6,273.8 420.0,359.5" fill="none" stroke="#a2dde6" stroke-width="0.9" stroke-linecap="round" stroke-linejoin="round" />
<polygon points="476.2,294.0 521.0,307.0 517.5,394.0 475.0,380.0" fill="#33787f" />
<polygon points="521.5,307.0 586.0,239.5 582.5,317.5 518.0,394.0" fill="#428994" />
<polygon points="476.2,293.8 478.8,291.8 517.5,301.2 583.5,231.7 585.0,231.2 588.8,236.2 521.2,306.7" fill="#5bb4c6" stroke="#a2dde6" stroke-width="0.7" stroke-linejoin="round" />
<polygon points="584.8,232.3 663.4,248.6 667.1,254.8 587.8,236.8" fill="#5bb4c6" stroke="#a2dde6" stroke-width="0.7" stroke-linejoin="round" />
<polyline points="521.2,307.0 517.7,394.0" fill="none" stroke="#a2dde6" stroke-width="0.9" stroke-linecap="round" stroke-linejoin="round" />
<polyline points="476.3,294.0 475.0,380.0" fill="none" stroke="#a2dde6" stroke-width="0.9" stroke-linecap="round" stroke-linejoin="round" />
<polyline points="586.5,239.0 582.5,317.5" fill="none" stroke="#a2dde6" stroke-width="0.9" stroke-linecap="round" stroke-linejoin="round" />
</g>
<path d="M598.8,421 l2.6,1.8 M601.2,421 l-2.2,1.8" stroke="#3a3a30" stroke-width=".8" filter="url(#soft)"/>
<g filter="url(#soft)">
<polygon points="452.5,253.75 436.25,250 446.25,242 462.5,245.6" fill="#e8f070" fill-opacity=".62"/>
<line x1="452.5" y1="243" x2="452.5" y2="202" stroke="#7c9ad0" stroke-width="1.3"/>
<polygon points="452.7,205.4 449.8,217.4 451.5,218.6 454.5,218.6 456,217.4" fill="#1c18c4"/>
<text x="451.3" y="201.8" font-size="5.5" fill="#3048e8" font-family="Liberation Sans" font-weight="bold">z</text>
<line x1="436.25" y1="250" x2="418.5" y2="246.2" stroke="#a6e070" stroke-width="1.2"/>
<polygon points="404.2,239 418.4,243 417.4,248.3 410,245.2" fill="#0c8c2c"/>
<polygon points="404.2,239 418.4,243 418,244.8" fill="#38c858"/>
<line x1="462.5" y1="245.6" x2="470.5" y2="239.6" stroke="#b8e060" stroke-width="1.2"/>
<polygon points="478.75,232.3 470.8,236.4 473.9,240.4" fill="#d42424"/>
<polygon points="470.8,236.4 473.9,240.4 472.8,240.6 470,237.4" fill="#3a1010"/>
<text x="479.3" y="230.3" font-size="5.5" fill="#e8e050" font-family="Liberation Sans" font-weight="bold">x</text>
<polyline points="436.25,242.5 436.25,234.4 452.5,238 462.5,231.25 462.5,238" fill="none" stroke="#2a52c4" stroke-width="1.1"/>
<line x1="436.25" y1="250" x2="436.25" y2="242.5" stroke="#18a048" stroke-width="1.1"/>
<line x1="462.5" y1="245.6" x2="462.5" y2="238" stroke="#9a5050" stroke-width="1.1"/>
<circle cx="452.7" cy="254" r="5.8" fill="none" stroke="#c9c9b6" stroke-width=".7" opacity=".75"/>
<text x="404.6" y="239.8" font-size="5" fill="#d0e868" font-family="Liberation Sans" font-weight="bold">y</text>
</g>
<g filter="url(#soft2)">
<polygon points="638.5,56.2 649.8,57.4 648.8,60.6 712,117 645.2,64.8 641.6,66" fill="url(#ag1)"/>
<polygon points="696.4,229 700.6,221 703.8,222.2 770.2,191.5 706.4,226.6 706,230.6" fill="url(#ag2)"/>
</g>
</svg>
</body></html>
